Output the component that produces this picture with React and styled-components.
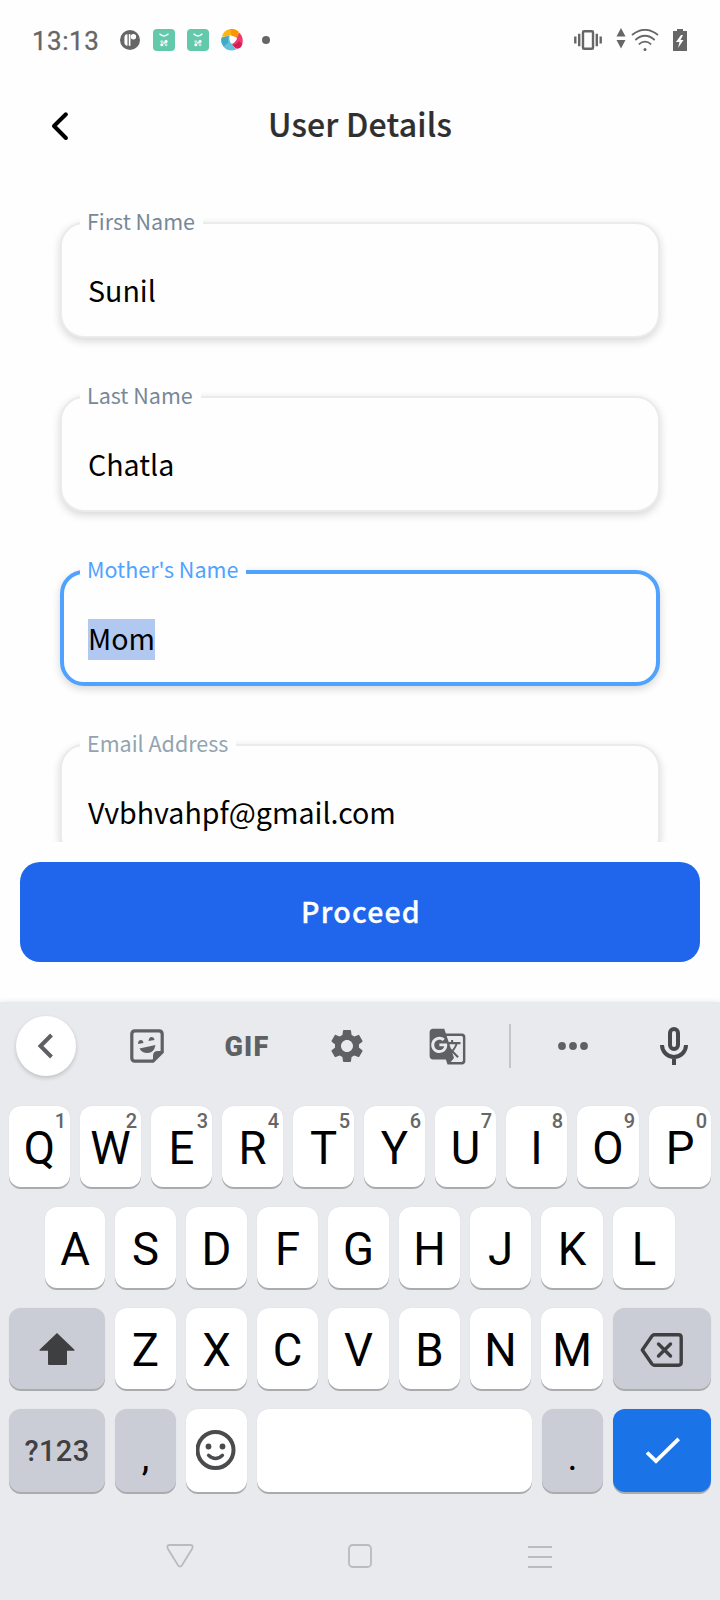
import React from 'react';
import styled, { createGlobalStyle } from 'styled-components';
import { MdSettings, MdGTranslate } from 'react-icons/md';

const GlobalStyle = createGlobalStyle`
  * { box-sizing: border-box; }
  body { margin: 0; background: #fefefe; }
`;

const textFont = '"Noto Sans CJK SC", "Noto Sans", sans-serif';
const systemFont = 'Roboto, "Liberation Sans", sans-serif';

const Screen = styled.main`
  width: 720px;
  height: 1600px;
  display: flex;
  flex-direction: column;
  overflow: hidden;
  background: #fefefe;
`;

const StatusBar = styled.header`
  height: 80px;
  flex: none;
  display: flex;
  align-items: center;
  justify-content: space-between;
  padding: 0 33px 0 32px;
  color: #666;
  svg { display: block; flex: none; }
`;

const StatusGroup = styled.div`
  display: flex;
  align-items: center;
  gap: ${(p) => p.$gap}px;
`;

const Clock = styled.span`
  width: 76px;
  font: 400 26px/30px ${systemFont};
  letter-spacing: 0.5px;
  padding-top: 2px;
  -webkit-text-stroke: 0.3px #666;
`;

const Dot = styled.span`
  width: 8px;
  height: 8px;
  margin-left: 7px;
  border-radius: 50%;
  background: #666;
`;

const TitleBar = styled.div`
  height: 92px;
  flex: none;
  display: grid;
  grid-template-columns: 120px 1fr 120px;
  align-items: center;
  svg { display: block; margin-left: 49px; }
`;

const Title = styled.h1`
  margin: 0;
  padding-bottom: 6px;
  text-align: center;
  color: #2f2f2f;
  font: 500 32px/46px ${textFont};
  letter-spacing: 0.2px;
  -webkit-text-stroke: 0.2px #2f2f2f;
`;

const Form = styled.section`
  height: 670px;
  flex: none;
  overflow: hidden;
  display: flex;
  flex-direction: column;
  gap: 58px;
  padding: 50px 60px 0;
`;

const FieldBox = styled.div`
  --edge: ${(p) => (p.$active ? 4 : 2)}px;
  position: relative;
  height: 116px;
  flex: none;
  display: flex;
  align-items: flex-start;
  padding: calc(49px - var(--edge)) calc(28px - var(--edge)) 0;
  border: var(--edge) solid ${(p) => (p.$active ? '#4fa3ff' : '#e8eceb')};
  border-radius: 24px;
  background: #fefefe;
  box-shadow: 0 3px 8px rgba(0, 0, 0, 0.16);
`;

const Label = styled.label`
  position: absolute;
  top: calc(-15px - var(--edge));
  left: calc(20px - var(--edge));
  padding: 0 8px 0 7px;
  background: #fefefe;
  color: ${(p) => p.$color};
  font: 400 21.5px/28px ${textFont};
  white-space: nowrap;
`;

const Value = styled.span`
  height: 41px;
  color: #000;
  background: ${(p) => (p.$selected ? '#b1c8f1' : 'transparent')};
  font: 400 28.6px/37px ${textFont};
  font-kerning: normal;
`;

const Action = styled.div`
  height: 160px;
  flex: none;
  padding: 20px 20px 0;
`;

const ProceedButton = styled.button`
  display: block;
  width: 100%;
  height: 100px;
  padding: 0 0 3px 2px;
  border: 0;
  border-radius: 20px;
  background: #1f66ec;
  color: #fefefe;
  font: 500 28.5px/40px ${textFont};
  letter-spacing: 1.2px;
  -webkit-text-stroke: 0.3px #fefefe;
`;

const Keyboard = styled.section`
  height: 598px;
  flex: none;
  background: #e8eaed;
  box-shadow: 0 -1px 5px rgba(0, 0, 0, 0.07);
`;

const Toolbar = styled.div`
  height: 104px;
  display: flex;
  align-items: center;
  padding: 0 32px 16px 16px;
  color: #5f6063;
  svg { display: block; flex: none; }
`;

const CollapseButton = styled.button`
  width: 60px;
  height: 60px;
  flex: none;
  padding: 0;
  border: 0;
  border-radius: 50%;
  background: #fff;
  box-shadow: 0 2px 4px rgba(0, 0, 0, 0.18);
  display: grid;
  place-items: center;
`;

const Tool = styled.span`
  width: ${(p) => p.$width}px;
  flex: none;
  display: flex;
  justify-content: ${(p) => (p.$end ? 'flex-end' : 'center')};
`;

const GifLabel = styled.span`
  padding-top: 2px;
  font: 900 27px/30px ${systemFont};
  letter-spacing: 1.3px;
`;

const Divider = styled.span`
  width: 2px;
  height: 44px;
  background: #c4c6ca;
`;

const KeyRow = styled.div`
  display: flex;
  gap: 10px;
  height: ${(p) => p.$height || 81}px;
  margin-bottom: 20px;
  padding-left: ${(p) => p.$indent || 9}px;
`;

const keyFill = { plain: '#fff', muted: '#cbcdd6', accent: '#1b73e8' };

const KeyCap = styled.button`
  position: relative;
  flex: none;
  width: ${(p) => p.$width}px;
  padding: 0;
  border: 0;
  border-radius: 12px;
  background: ${(p) => keyFill[p.$tone || 'plain']};
  box-shadow: 0 2px 0 #a9abae, 0 0 1px rgba(0, 0, 0, 0.12);
  color: #000;
  display: flex;
  justify-content: center;
  font: 400 45.5px/52px ${systemFont};
  svg { display: block; align-self: center; }
`;

const Letter = styled.span`
  padding-top: 17px;
`;

const Punctuation = styled.span`
  padding-top: 22px;
  font-size: 38px;
`;

const ModeText = styled.span`
  padding-top: 16px;
  color: #3f4043;
  font-size: 29px;
  font-weight: 500;
  line-height: 52px;
  letter-spacing: 0.4px;
`;

const Hint = styled.sup`
  position: absolute;
  top: 3px;
  right: 4px;
  color: #666;
  font: 500 20px/24px ${systemFont};
`;

const NavBar = styled.nav`
  height: 88px;
  margin-top: -20px;
  padding-top: 20px;
  box-sizing: content-box;
  display: grid;
  grid-template-columns: repeat(3, 180px);
  justify-content: center;
  justify-items: center;
  align-items: center;
`;

function CardAppIcon() {
  return (
    <svg width="22" height="22" viewBox="0 0 22 22">
      <rect width="22" height="22" rx="4" fill="#62c9aa" />
      <path d="M6.5 4.8Q11 9.2 15.5 4.8" fill="none" stroke="#fff" strokeWidth="1.4" />
      <g fill="#fff">
        <circle cx="8.8" cy="12.6" r="1.6" opacity=".55" />
        <circle cx="13" cy="12.4" r="1.6" />
        <circle cx="8.8" cy="15.8" r="1.5" />
        <circle cx="13" cy="15.8" r="1.5" opacity=".6" />
        <circle cx="11" cy="14" r="1.1" opacity=".8" />
      </g>
    </svg>
  );
}

function SwirlIcon() {
  return (
    <svg width="22" height="22" viewBox="0 0 22 22">
      <path d="M1 7.5C3 1 9-1 14 .6L17.5 2.5V9.5C14.5 5.5 10 5 6.5 8Z" fill="#fdb515" />
      <path d="M9.5 0Q14-.3 17.5 2.5V10.5Q14.5 7 10.5 7Z" fill="#ff9300" />
      <path d="M18 3.5Q23.5 8.5 21 16Q19.5 20 15.5 19.5L9.5 15.5Q15 14 16.5 8Z" fill="#ee3a70" />
      <path d="M21 15Q19.5 20 15.5 19.5L9.5 15.5Q15 16.5 18 12Z" fill="#d81b53" />
      <path d="M.8 8.5L8.5 7Q7.5 12.5 11 15L15.5 20.6Q5 24 1 15Q-.6 11 .8 8.5Z" fill="#62c1dc" />
      <path d="M.8 8.5L8.5 7Q6.5 10 7.5 13.5L2.5 17.5Q-.8 12.5.8 8.5Z" fill="#43a9c4" />
    </svg>
  );
}

const rowOne = 'QWERTYUIOP'.split('');
const rowTwo = 'ASDFGHJKL'.split('');
const rowThree = 'ZXCVBNM'.split('');

const fields = [
  { label: 'First Name', value: 'Sunil', color: '#778899' },
  { label: 'Last Name', value: 'Chatla', color: '#778899' },
  { label: "Mother's Name", value: 'Mom', color: '#4fa3ff', active: true },
  { label: 'Email Address', value: 'Vvbhvahpf@gmail.com', color: '#93a4b0' },
];

export default function App() {
  return (
    <Screen>
      <GlobalStyle />
      <StatusBar>
        <StatusGroup $gap={12}>
          <Clock>13:13</Clock>
          <svg width="21" height="20" viewBox="0 0 21 20">
            <circle cx="10" cy="10" r="10" fill="#666" />
            <path d="M7.5 4.2Q4.4 4 4.4 8V12Q4.4 15.8 7.5 15.8Z" fill="#fff" />
            <path d="M9.6 4.2V15.8" stroke="#fff" strokeWidth="1.7" />
            <circle cx="13.4" cy="6.8" r="2.7" fill="#fff" />
          </svg>
          <CardAppIcon />
          <CardAppIcon />
          <SwirlIcon />
          <Dot />
        </StatusGroup>
        <StatusGroup $gap={14}>
          <svg width="28" height="20" viewBox="0 0 28 20">
            <rect x="9" y="1.2" width="10" height="17.6" rx="1" fill="none" stroke="#666" strokeWidth="2.4" />
            <path d="M1.3 6.5V13.5M5.2 3.7V16.3M22.8 3.7V16.3M26.7 6.5V13.5" stroke="#666" strokeWidth="2.4" />
          </svg>
          <StatusGroup $gap={5}>
            <svg width="10" height="26" viewBox="0 0 10 26">
              <path d="M.5 9.5L5 1 9.5 9.5ZM.5 13L5 21.5 9.5 13Z" fill="#666" />
            </svg>
            <svg width="28" height="22" viewBox="0 0 28 22">
              <path d="M1 6Q14-4.5 27 6M4.3 11Q14 2.5 23.7 11M7.8 15.3Q14 10 20.2 15.3" fill="none" stroke="#666" strokeWidth="1.7" />
              <circle cx="14" cy="20.4" r="1.5" fill="#666" />
            </svg>
          </StatusGroup>
          <svg width="14" height="22" viewBox="0 0 14 22">
            <path d="M0 2H4V0H10V2H14V22H0Z" fill="#666" />
            <path d="M8 6L3 13H6.5L5 19 10.5 11H7.5L10 6Z" fill="#fff" />
          </svg>
        </StatusGroup>
      </StatusBar>

      <TitleBar>
        <svg width="20" height="30" viewBox="0 0 20 30">
          <path d="M16.9 3.3L5 15 16.9 27" fill="none" stroke="#000" strokeWidth="4" strokeLinecap="round" strokeLinejoin="round" />
        </svg>
        <Title>User Details</Title>
      </TitleBar>

      <Form>
        {fields.map((f) => (
          <FieldBox key={f.label} $active={f.active}>
            <Label $color={f.color}>{f.label}</Label>
            <Value $selected={f.active}>{f.value}</Value>
          </FieldBox>
        ))}
      </Form>

      <Action>
        <ProceedButton>Proceed</ProceedButton>
      </Action>

      <Keyboard>
        <Toolbar>
          <CollapseButton>
            <svg width="20" height="28" viewBox="0 0 20 28">
              <path d="M15.5 3L4.5 14 15.5 25" fill="none" stroke="#5f6063" strokeWidth="4" />
            </svg>
          </CollapseButton>
          <Tool $width={142}>
            <svg width="34" height="34" viewBox="0 0 34 34">
              <path d="M5 1.8H29Q32.2 1.8 32.2 5V23L23 32.2H5Q1.8 32.2 1.8 29V5Q1.8 1.8 5 1.8Z" fill="none" stroke="#5f6063" strokeWidth="3.2" />
              <path d="M33 22L23 33V27Q23 22 28 22Z" fill="#5f6063" />
              <path d="M8 15Q8 11 11 11 13 11 13.5 14ZM18.5 12Q19 8 21.5 8 24 8 24.5 11ZM9.5 19.5L25.5 16Q24 24 17.5 24 12 24 9.5 19.5Z" fill="#5f6063" />
            </svg>
          </Tool>
          <Tool $width={58}><GifLabel>GIF</GifLabel></Tool>
          <Tool $width={142}><MdSettings size={40} /></Tool>
          <Tool $width={59}><MdGTranslate size={39} /></Tool>
          <Tool $width={66}><Divider /></Tool>
          <Tool $width={60}>
            <svg width="32" height="10" viewBox="0 0 32 10" fill="#5f6063">
              <circle cx="5" cy="5" r="3.9" />
              <circle cx="16" cy="5" r="3.9" />
              <circle cx="27" cy="5" r="3.9" />
            </svg>
          </Tool>
          <Tool $width={85} $end>
            <svg width="28" height="40" viewBox="0 0 28 40" fill="none" stroke="#48494b" strokeWidth="4">
              <rect x="10" y="3" width="8" height="20" rx="4" />
              <path d="M2 19A12 12 0 0 0 26 19M14 31V39" />
            </svg>
          </Tool>
        </Toolbar>

        <KeyRow>
          {rowOne.map((k, i) => (
            <KeyCap key={k} $width={i > 7 ? 62 : 61}>
              <Letter>{k}</Letter>
              <Hint>{(i + 1) % 10}</Hint>
            </KeyCap>
          ))}
        </KeyRow>
        <KeyRow $indent={45}>
          {rowTwo.map((k, i) => (
            <KeyCap key={k} $width={i === 0 ? 60 : i > 6 ? 62 : 61}><Letter>{k}</Letter></KeyCap>
          ))}
        </KeyRow>
        <KeyRow>
          <KeyCap $width={96} $tone="muted">
            <svg width="38" height="36" viewBox="0 0 38 36">
              <path d="M19 2L36.5 18.8Q36.8 19.7 36 19.7H29V33Q29 34 28 34H11Q10 34 10 33V19.7H2Q1.2 19.7 1.5 18.8Z" fill="#3e3f41" />
            </svg>
          </KeyCap>
          {rowThree.map((k) => (
            <KeyCap key={k} $width={k === 'M' ? 62 : 61}><Letter>{k}</Letter></KeyCap>
          ))}
          <KeyCap $width={98} $tone="muted">
            <svg width="44" height="39" viewBox="0 -3 44 39" fill="none" stroke="#3e3f41" strokeWidth="3.4" strokeLinejoin="round" strokeLinecap="round">
              <path d="M14 2.8H38.5Q41.2 2.8 41.2 5.5V30.5Q41.2 33.2 38.5 33.2H14Q13 33.2 12 32L2.3 18 12 4Q13 2.8 14 2.8Z" />
              <path d="M18.5 12L30.5 24M30.5 12L18.5 24" />
            </svg>
          </KeyCap>
        </KeyRow>
        <KeyRow $height={83}>
          <KeyCap $width={96} $tone="muted"><ModeText>?123</ModeText></KeyCap>
          <KeyCap $width={61} $tone="muted"><Punctuation>,</Punctuation></KeyCap>
          <KeyCap $width={61}>
            <svg width="41" height="42" viewBox="0.5 0.5 41 42">
              <circle cx="20" cy="20.5" r="18" fill="none" stroke="#4a4b4c" strokeWidth="4" />
              <circle cx="13" cy="17" r="2.9" fill="#4a4b4c" />
              <circle cx="27" cy="17" r="2.9" fill="#4a4b4c" />
              <path d="M13 25.8Q20 32.3 27 25.8" fill="none" stroke="#4a4b4c" strokeWidth="3.3" strokeLinecap="round" />
            </svg>
          </KeyCap>
          <KeyCap $width={275} aria-label="space" />
          <KeyCap $width={61} $tone="muted"><Punctuation>.</Punctuation></KeyCap>
          <KeyCap $width={98} $tone="accent">
            <svg width="38" height="30" viewBox="0 0 38 30">
              <path d="M4 16.5L13 25.2 35.7 2.8" fill="none" stroke="#fff" strokeWidth="3.8" />
            </svg>
          </KeyCap>
        </KeyRow>

        <NavBar>
          <svg width="28" height="28" viewBox="0 0 28 28">
            <path d="M3.5 3H24.5Q28 3.3 26 7L16 23.2Q14 25.8 12 23.2L2 7Q0 3.3 3.5 3Z" fill="none" stroke="#babbbd" strokeWidth="1.8" />
          </svg>
          <svg width="24" height="24" viewBox="0 0 24 24">
            <rect x="1" y="1" width="22" height="22" rx="3.5" fill="none" stroke="#babbbd" strokeWidth="1.8" />
          </svg>
          <svg width="24" height="24" viewBox="0 0 24 24">
            <path d="M0 3H24M0 13H24M0 23H24" stroke="#babbbd" strokeWidth="1.8" />
          </svg>
        </NavBar>
      </Keyboard>
    </Screen>
  );
}
